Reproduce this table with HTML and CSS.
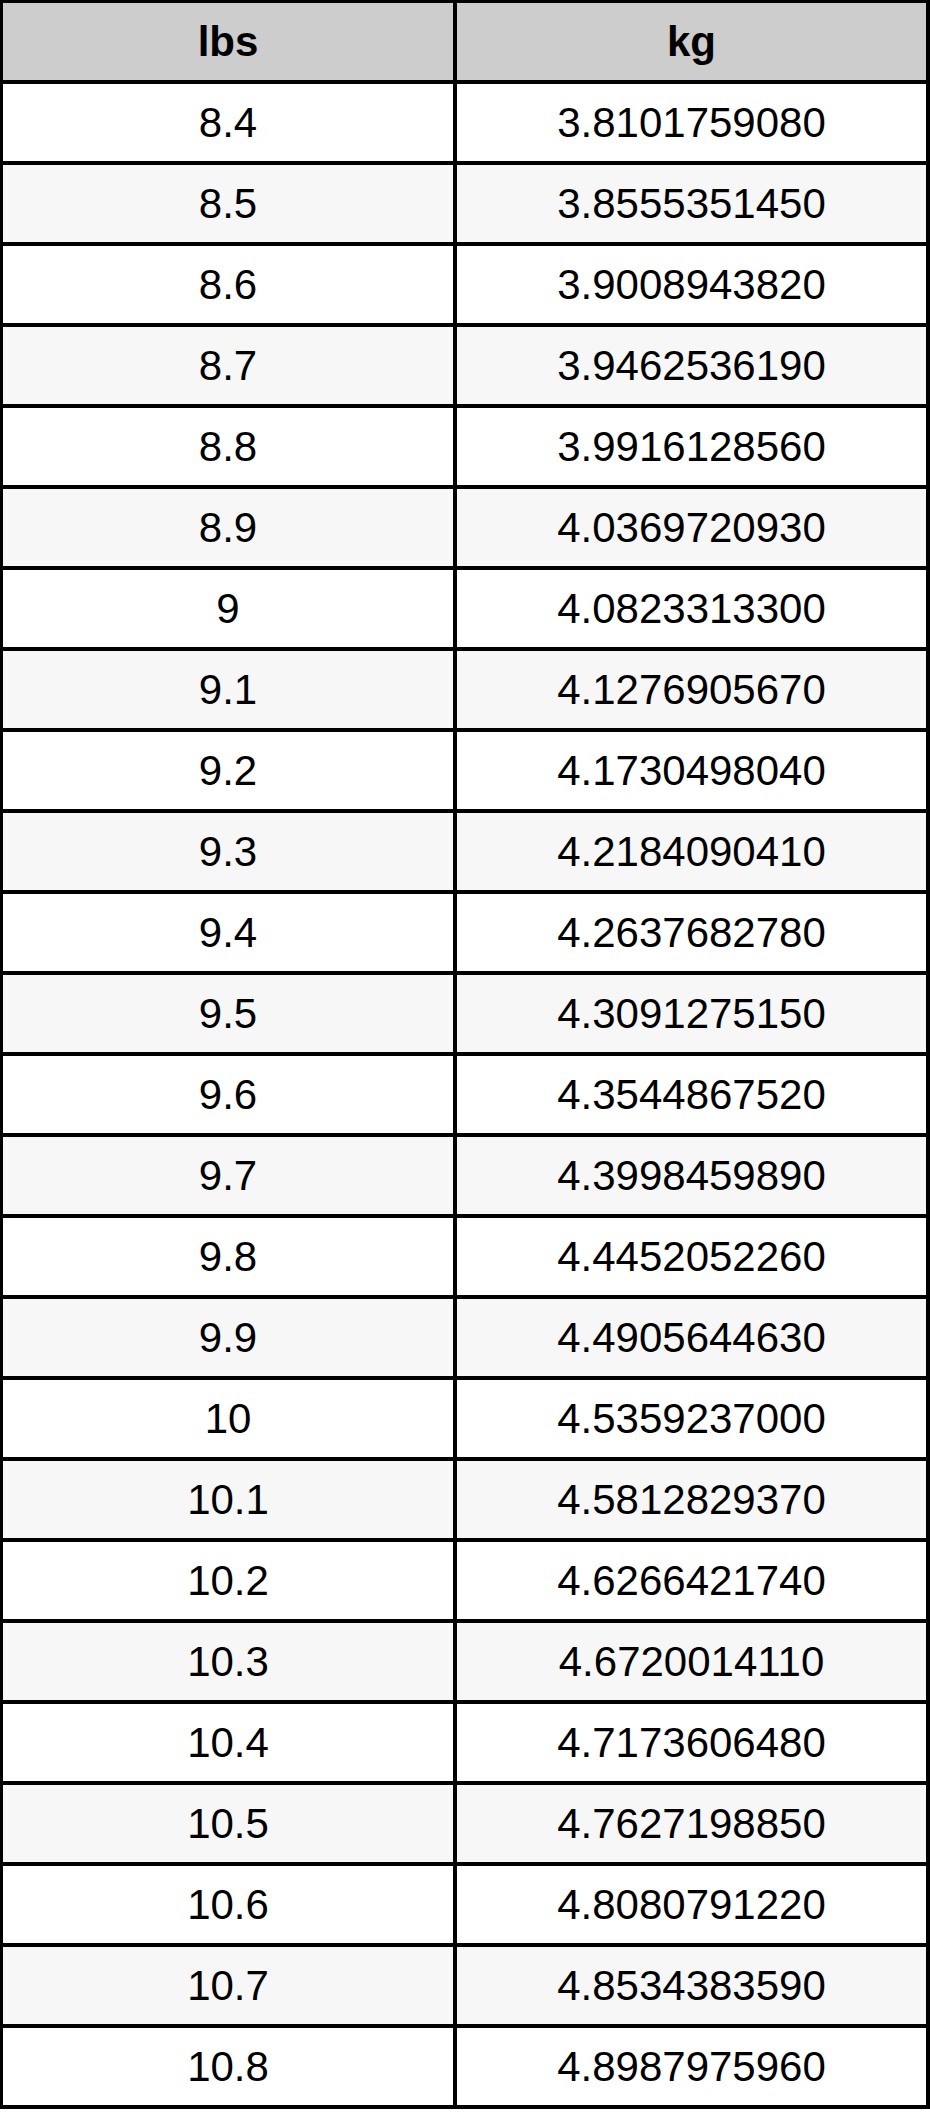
FILE: index.html
```html
<!DOCTYPE html>
<html>
<head>
<meta charset="utf-8">
<link rel="stylesheet" href="styles.css">
</head>
<body>
<table class="conv">
<thead>
<tr><th class="c1">lbs</th><th class="c2">kg</th></tr>
</thead>
<tbody>
<tr><td>8.4</td><td>3.8101759080</td></tr>
<tr><td>8.5</td><td>3.8555351450</td></tr>
<tr><td>8.6</td><td>3.9008943820</td></tr>
<tr><td>8.7</td><td>3.9462536190</td></tr>
<tr><td>8.8</td><td>3.9916128560</td></tr>
<tr><td>8.9</td><td>4.0369720930</td></tr>
<tr><td>9</td><td>4.0823313300</td></tr>
<tr><td>9.1</td><td>4.1276905670</td></tr>
<tr><td>9.2</td><td>4.1730498040</td></tr>
<tr><td>9.3</td><td>4.2184090410</td></tr>
<tr><td>9.4</td><td>4.2637682780</td></tr>
<tr><td>9.5</td><td>4.3091275150</td></tr>
<tr><td>9.6</td><td>4.3544867520</td></tr>
<tr><td>9.7</td><td>4.3998459890</td></tr>
<tr><td>9.8</td><td>4.4452052260</td></tr>
<tr><td>9.9</td><td>4.4905644630</td></tr>
<tr><td>10</td><td>4.5359237000</td></tr>
<tr><td>10.1</td><td>4.5812829370</td></tr>
<tr><td>10.2</td><td>4.6266421740</td></tr>
<tr><td>10.3</td><td>4.6720014110</td></tr>
<tr><td>10.4</td><td>4.7173606480</td></tr>
<tr><td>10.5</td><td>4.7627198850</td></tr>
<tr><td>10.6</td><td>4.8080791220</td></tr>
<tr><td>10.7</td><td>4.8534383590</td></tr>
<tr><td>10.8</td><td>4.8987975960</td></tr>
</tbody>
</table>
</body>
</html>
```
FILE: styles.css
```css
html, body {
  margin: 0;
  padding: 0;
  background: #ffffff;
}

.conv {
  border-collapse: separate;
  border-spacing: 0;
  border-top: 3px solid #000;
  border-left: 3px solid #000;
  width: 930px;
  table-layout: fixed;
  font-family: "Liberation Sans", Arial, sans-serif;
  font-size: 42px;
  color: #000;
}

.conv th,
.conv td {
  border-right: 4px solid #000;
  border-bottom: 4px solid #000;
  height: 77px;
  padding: 0;
  text-align: center;
  vertical-align: middle;
  line-height: 1;
  box-sizing: content-box;
}

.conv th {
  background: #cdcdcd;
  font-weight: bold;
}

.conv .c1 {
  width: 450px;
}

.conv tbody tr:nth-child(even) td {
  background: #f7f7f7;
}
```
